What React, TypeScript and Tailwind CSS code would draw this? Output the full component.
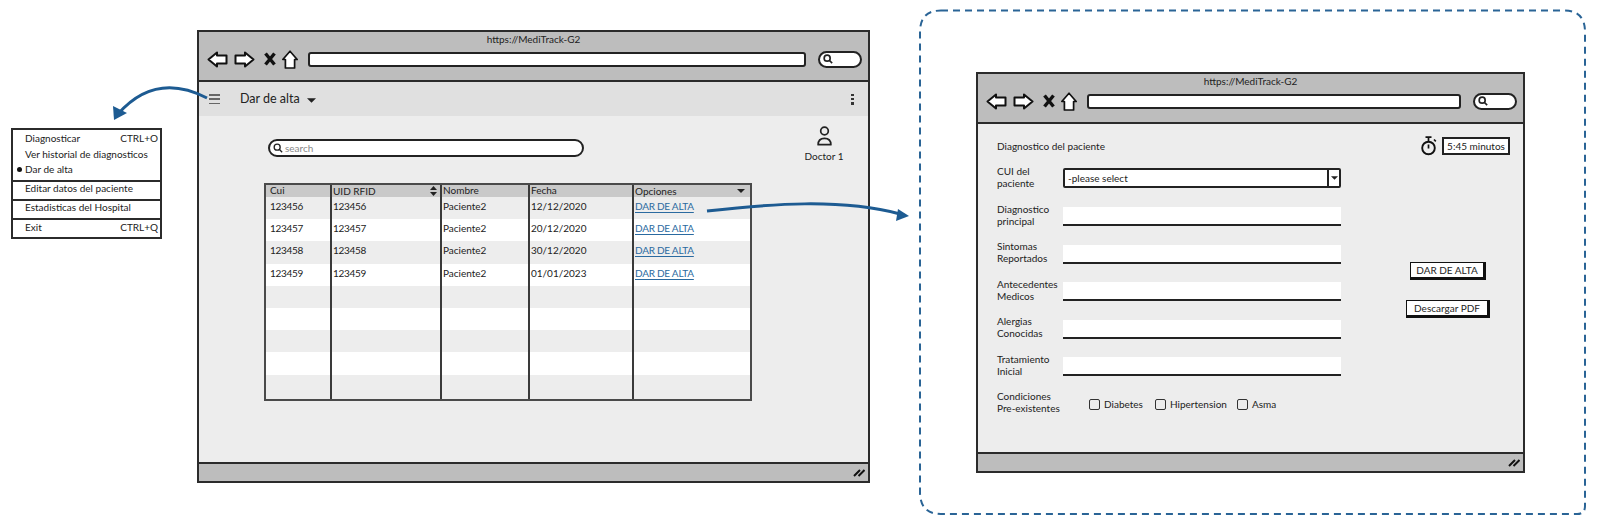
import type { ReactNode } from "react";

const rows = [
  { cui: "123456", uid: "123456", name: "Paciente2", date: "12/12/2020" },
  { cui: "123457", uid: "123457", name: "Paciente2", date: "20/12/2020" },
  { cui: "123458", uid: "123458", name: "Paciente2", date: "30/12/2020" },
  { cui: "123459", uid: "123459", name: "Paciente2", date: "01/01/2023" },
  null,
  null,
  null,
  null,
  null,
];

const fields = [
  ["Diagnostico", "principal"],
  ["Sintomas", "Reportados"],
  ["Antecedentes", "Medicos"],
  ["Alergias", "Conocidas"],
  ["Tratamiento", "Inicial"],
];

const gridCols = "grid grid-cols-[66px_110px_88px_104px_1fr]";
const cellLine = "border-r-2 border-[#3a3a3a] pl-[1px]";

const BackIcon = ({ flip = false }: { flip?: boolean }) => (
  <svg width="21" height="17" viewBox="0 0 21 17" className={flip ? "shrink-0 -scale-x-100" : "shrink-0"}>
    <path d="M1.5 8.5 10 1.5V4.5h9.5v8H10v3z" fill="#fff" stroke="#111" strokeWidth="2" strokeLinejoin="round" />
  </svg>
);

const CloseIcon = () => (
  <svg width="12" height="14" viewBox="0 0 12 14" className="shrink-0">
    <path d="M1.5 1.5 10.5 12.5M10.5 1.5 1.5 12.5" stroke="#111" strokeWidth="3.4" />
  </svg>
);

const HomeIcon = () => (
  <svg width="16" height="19" viewBox="0 0 16 19" className="shrink-0">
    <path d="M8 1.2 15.2 9.5H12.6V18H3.4V9.5H.8z" fill="#fff" stroke="#111" strokeWidth="1.7" strokeLinejoin="round" />
  </svg>
);

const MagnifierIcon = ({ size, stroke }: { size: number; stroke: number }) => (
  <svg width={size} height={size} viewBox="0 0 12 12" className="shrink-0">
    <circle cx="5" cy="5" r="3.6" fill="none" stroke="#222" strokeWidth={stroke} />
    <path d="M7.8 7.8 11 11" stroke="#222" strokeWidth={stroke} />
  </svg>
);

const SortIcon = () => (
  <svg width="7" height="10" viewBox="0 0 7 10" className="shrink-0">
    <path d="M3.5 0 7 4H0zM3.5 10 0 6h7z" fill="#222" />
  </svg>
);

const Caret = ({ w = 10, h = 5 }: { w?: number; h?: number }) => (
  <svg width={w} height={h} viewBox="0 0 10 5" className="shrink-0">
    <path d="M0 0h10L5 5z" fill="#222" />
  </svg>
);

const UserIcon = () => (
  <svg width="17" height="20" viewBox="0 0 18 22">
    <circle cx="9" cy="5.5" r="4.2" fill="none" stroke="#222" strokeWidth="1.9" />
    <path d="M2 20.5C2 15 5 13.5 9 13.5S16 15 16 20.5z" fill="none" stroke="#222" strokeWidth="1.9" strokeLinejoin="round" />
  </svg>
);

const TimerIcon = () => (
  <svg width="16" height="20" viewBox="0 0 16 20" className="shrink-0">
    <circle cx="7.5" cy="12" r="6.3" fill="none" stroke="#111" strokeWidth="1.9" />
    <path d="M4.5 1.2h6M7.5 1.2V5M7.5 8.5V12.5M13 3.5l1.8 1.8" fill="none" stroke="#111" strokeWidth="1.7" />
  </svg>
);

const BrowserWindow = ({ className, children }: { className: string; children: ReactNode }) => (
  <div className={`absolute flex flex-col border-2 border-[#2b2b2b] bg-[#ededed] ${className}`}>
    <div className="h-[50px] shrink-0 border-b-2 border-[#2b2b2b] bg-[#bdbdbd]">
      <p className="h-[14px] text-center text-[10px] leading-[14px] text-[#222]">https://MediTrack-G2</p>
      <div className="mt-[4px] flex h-[18px] items-center pl-[8px] pr-[6px]">
        <BackIcon />
        <span className="ml-[6px]">
          <BackIcon flip />
        </span>
        <span className="ml-[9px]">
          <CloseIcon />
        </span>
        <span className="ml-[6px]">
          <HomeIcon />
        </span>
        <div className="ml-[10px] h-[15px] flex-1 rounded-[3px] border-2 border-[#222] bg-white" />
        <div className="ml-[12px] flex h-[17px] w-[44px] items-center rounded-full border-2 border-[#222] bg-white pl-[3px]">
          <MagnifierIcon size={10} stroke={2} />
        </div>
      </div>
    </div>
    {children}
    <div className="flex h-[19px] shrink-0 items-center justify-end border-t-2 border-[#2b2b2b] bg-[#bdbdbd] pr-[3px]">
      <svg width="12" height="9" viewBox="0 0 12 9">
        <path d="M1 8 7 2M5.5 8 11.5 2" stroke="#111" strokeWidth="2" />
      </svg>
    </div>
  </div>
);

const ContextMenu = () => (
  <div className="absolute left-[11px] top-[128px] flex h-[111px] w-[151px] flex-col border-2 border-[#2b2b2b] bg-white text-[10px] leading-[15.5px] text-[#222]">
    <div className="h-[52px] shrink-0 border-b-2 border-[#2b2b2b] pl-[12px] pr-[2px] pt-[1px]">
      <div className="flex justify-between">
        <span>Diagnosticar</span>
        <span>CTRL+O</span>
      </div>
      <div>Ver historial de diagnosticos</div>
      <div className="relative">
        <span className="absolute -left-[8px] top-[5px] size-[5px] rounded-full bg-[#111]" />
        Dar de alta
      </div>
    </div>
    <div className="flex h-[19px] shrink-0 items-center border-b-2 border-[#2b2b2b] pb-[4px] pl-[12px]">Editar datos del paciente</div>
    <div className="flex h-[19px] shrink-0 items-center border-b-2 border-[#2b2b2b] pb-[4px] pl-[12px]">Estadisticas del Hospital</div>
    <div className="flex flex-1 items-center justify-between pb-[3px] pl-[12px] pr-[2px]">
      <span>Exit</span>
      <span>CTRL+Q</span>
    </div>
  </div>
);

const PatientsTable = () => (
  <div className="-mt-[1px] ml-[65px] w-[488px] border-2 border-[#4a4a4a] text-[10px] text-[#222]">
    <div className={`${gridCols} h-[12px] bg-[#c9c9c9] leading-[10px]`}>
      <div className={`${cellLine} pl-[4px]`}>Cui</div>
      <div className={`${cellLine} flex items-center justify-between pr-[3px]`}>
        <span>UID RFID</span>
        <SortIcon />
      </div>
      <div className={cellLine}>Nombre</div>
      <div className={cellLine}>Fecha</div>
      <div className="flex items-center justify-between pl-[1px] pr-[5px]">
        <span>Opciones</span>
        <Caret w={8} h={4} />
      </div>
    </div>
    {rows.map((row, i) => (
      <div key={i} className={`${gridCols} ${i === 8 ? "h-[24px]" : "h-[22.2px]"} ${i % 2 === 0 ? "bg-[#ededed]" : "bg-white"} leading-[19px]`}>
        <div className={`${cellLine} pl-[4px] tracking-[-0.3px]`}>{row?.cui}</div>
        <div className={`${cellLine} tracking-[-0.3px]`}>{row?.uid}</div>
        <div className={cellLine}>{row?.name}</div>
        <div className={cellLine}>{row?.date}</div>
        <div className="pl-[1px]">{row && <span className="tracking-[-0.25px] text-[#2a6aa0] underline underline-offset-2">DAR DE ALTA</span>}</div>
      </div>
    ))}
  </div>
);

const ListWindow = () => (
  <BrowserWindow className="left-[197px] top-[30px] h-[453px] w-[673px]">
    <div className="flex h-[34px] shrink-0 items-center bg-[#e0e0e0] pl-[10px] pr-[14px] text-[12.5px] text-[#222]">
      <div className="flex h-[10px] w-[11px] flex-col justify-between">
        <span className="h-[1.5px] bg-[#666]" />
        <span className="h-[1.5px] bg-[#666]" />
        <span className="h-[1.5px] bg-[#666]" />
      </div>
      <span className="ml-[20px]">Dar de alta</span>
      <span className="ml-[7px] mt-[2px]">
        <Caret w={9} h={5} />
      </span>
      <div className="ml-auto flex h-[11px] w-[3px] flex-col justify-between">
        <span className="size-[2.5px] bg-[#333]" />
        <span className="size-[2.5px] bg-[#333]" />
        <span className="size-[2.5px] bg-[#333]" />
      </div>
    </div>
    <div className="flex-1">
      <div className="flex h-[68px] items-start pl-[69px] pr-[7px]">
        <div className="mt-[23px] flex h-[18px] w-[316px] items-center rounded-full border-2 border-[#222] bg-white pl-[3px] text-[10px] text-[#888]">
          <MagnifierIcon size={10} stroke={1.6} />
          <span className="ml-[2px]">search</span>
        </div>
        <div className="ml-auto mt-[10px] flex w-[60px] -translate-x-[7px] flex-col items-center text-[10px] text-[#222]">
          <UserIcon />
          <span className="mt-[3px]">Doctor 1</span>
        </div>
      </div>
      <PatientsTable />
    </div>
  </BrowserWindow>
);

const FormWindow = () => (
  <BrowserWindow className="left-[976px] top-[72px] h-[401px] w-[549px]">
    <div className="flex flex-1 pl-[19px] text-[10px] leading-[12px] text-[#222]">
      <div className="w-[344px] shrink-0 pt-[16px]">
        <p>Diagnostico del paciente</p>
        <div className="mt-[13px] flex flex-col gap-[13.5px]">
          <div className="flex h-[24px] items-center">
            <div className="w-[66px] shrink-0">
              CUI del
              <br />
              paciente
            </div>
            <div className="mt-[2px] flex h-[20px] flex-1 items-center rounded-[2px] border-2 border-[#222] bg-white pl-[3px]">
              <span className="flex-1">-please select</span>
              <div className="flex h-full w-[12px] items-center justify-center border-l-2 border-[#222]">
                <Caret w={7} h={4} />
              </div>
            </div>
          </div>
          {fields.map(([a, b]) => (
            <div key={a} className="flex h-[24px] items-center">
              <div className="w-[66px] shrink-0">
                {a}
                <br />
                {b}
              </div>
              <div className="mt-[4px] h-[19px] flex-1 border-b-2 border-[#222] bg-white" />
            </div>
          ))}
          <div className="flex h-[24px] items-center">
            <div className="w-[92px] shrink-0">
              Condiciones
              <br />
              Pre-existentes
            </div>
            {[
              ["Diabetes", "w-[66px]"],
              ["Hipertension", "w-[82px]"],
              ["Asma", "w-[50px]"],
            ].map(([label, width]) => (
              <div key={label} className={`mt-[4px] flex items-center gap-[4px] ${width}`}>
                <span className="size-[11px] shrink-0 rounded-[2px] border-[1.5px] border-[#333] bg-[#ededed]" />
                <span>{label}</span>
              </div>
            ))}
          </div>
        </div>
      </div>
      <div className="flex flex-1 flex-col items-end pr-[13px] pt-[12px]">
        <div className="flex items-center gap-[5px]">
          <TimerIcon />
          <div className="flex h-[18px] w-[68px] items-center justify-center border-2 border-[#222] bg-white">5:45 minutos</div>
        </div>
        <div className="mr-[20px] mt-[106px] flex w-[84px] flex-col items-center gap-[20px]">
          <div className="flex h-[18px] w-[76px] items-center justify-center border border-b-[3px] border-r-[3px] border-[#111] bg-white">DAR DE ALTA</div>
          <div className="flex h-[18px] w-[84px] items-center justify-center border border-b-[3px] border-r-[3px] border-[#111] bg-white">Descargar PDF</div>
        </div>
      </div>
    </div>
  </BrowserWindow>
);

export default function App() {
  return (
    <div className="relative h-[523px] w-[1600px] overflow-hidden whitespace-nowrap bg-white font-['Lato',sans-serif]">
      {/* dashed frame + blue arrows sit on the canvas */}
      <svg width="1600" height="523" viewBox="0 0 1600 523" className="absolute left-0 top-0" fill="none">
        <path
          d="M941 10.5H1564Q1585 10.5 1585 32V506Q1585 514 1577 514H941Q920 514 920 492V32Q920 10.5 941 10.5Z"
          stroke="#2a6496"
          strokeWidth="2"
          strokeDasharray="7 5"
        />
      </svg>
      <ListWindow />
      <FormWindow />
      <ContextMenu />
      <svg width="1600" height="523" viewBox="0 0 1600 523" className="pointer-events-none absolute left-0 top-0" fill="none">
        <path d="M207 98C180 84 148 80 118 114" stroke="#1d5b92" strokeWidth="3" />
        <path d="M114 120 113 106 127 113z" fill="#1d5b92" />
        <path d="M707 211C770 204 840 198 900 214" stroke="#1d5b92" strokeWidth="3" />
        <path d="M909 216 896 221 898 209z" fill="#1d5b92" />
      </svg>
    </div>
  );
}
